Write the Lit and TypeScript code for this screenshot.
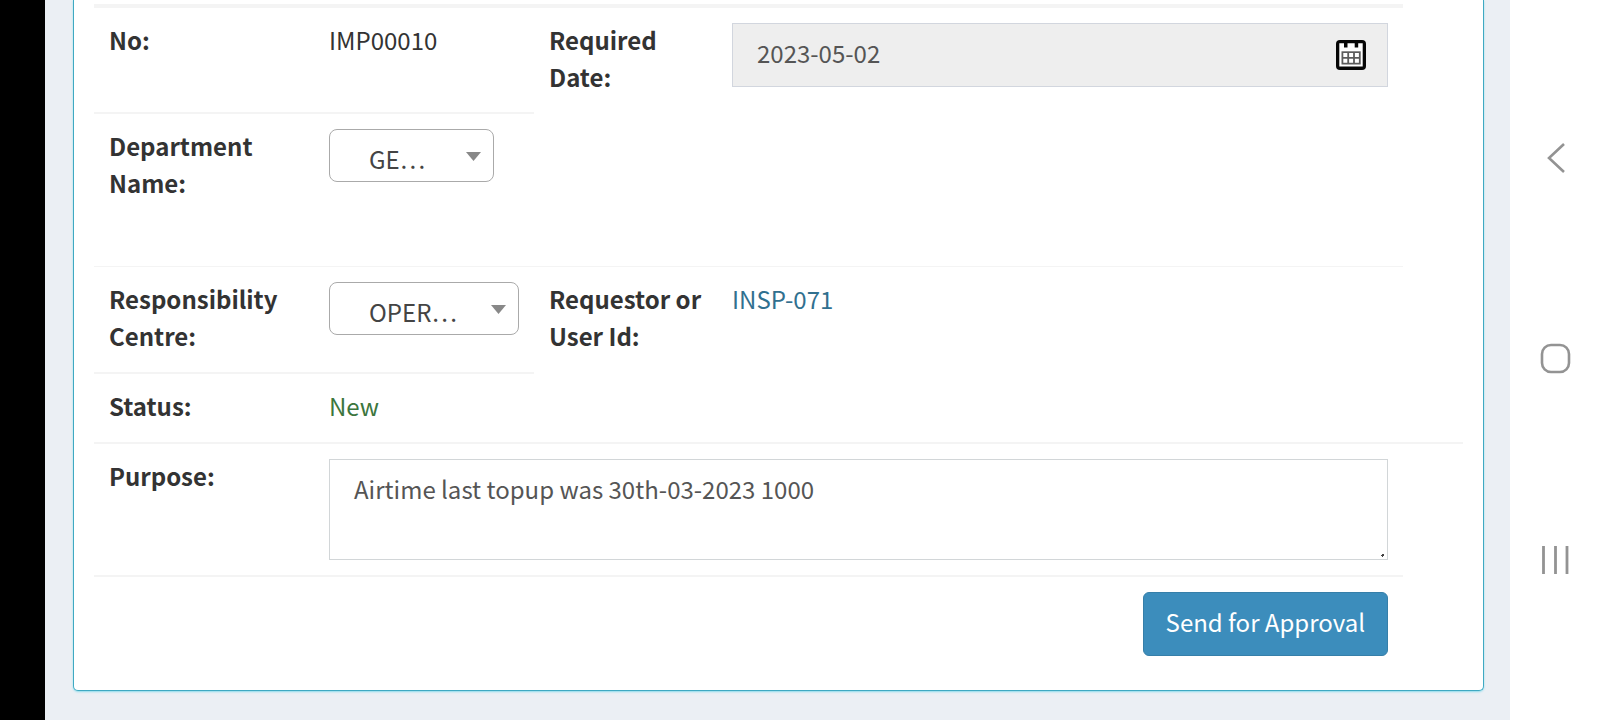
import { LitElement, html, css, svg } from "lit";
import { customElement } from "lit/decorators.js";

const caret = html`<svg class="caret" viewBox="0 0 15 9" aria-hidden="true"><path d="M0 0H15L7.5 9Z" fill="#888"/></svg>`;

@customElement("app-root")
export class AppRoot extends LitElement {
  static styles = css`
    :host {
      display: block;
      font: 400 24px/37px "Noto Sans CJK SC", "Noto Sans", sans-serif;
      color: #333;
    }
    * { box-sizing: border-box; }
    .screen {
      display: grid;
      grid-template-columns: 45px minmax(0, 1fr) 90px;
      min-height: 100vh;
      background: #fff;
    }
    .cutout { background: #000; }
    .page { background: #ebeff4; padding: 0 26px 29px 28px; }
    .card {
      background: #fff;
      border: 1px solid #3fa9c2;
      border-top: 0;
      border-radius: 0 0 5px 5px;
      box-shadow: 0 1px 2px #8fdcec;
      padding: 4px 20px 19px;
    }
    .form {
      display: grid;
      grid-template-columns:
        minmax(0, 220fr) minmax(0, 220fr) minmax(0, 183fr)
        minmax(0, 686fr) minmax(0, 60fr);
      grid-template-rows:
        4px minmax(106px, auto) minmax(153px, auto) minmax(107px, auto)
        minmax(70px, auto) auto auto;
    }
    .cell { padding: 15px; min-width: 0; }
    .text { padding: 13px 15px 17px; }
    .wide { grid-column: 2 / 5; }
    .first { grid-column: 1; }
    .label { font-weight: 700; }
    .rule { border-bottom: 2px solid #f4f4f4; }
    .thin { border-bottom: 1px solid #f4f4f4; }
    .top { grid-column: 1 / 5; background: #f4f4f4; }
    .rest { grid-column: 3 / 6; }
    .blank { grid-column: 3 / 5; }
    .user { color: #31708f; text-decoration: none; }
    .new { color: #3c763d; }
    .field { position: relative; display: block; }
    .pick { display: block; position: relative; }
    .dept { width: 165px; }
    .centre { width: 190px; }
    select, input, textarea, button { font: inherit; margin: 0; outline: 0; }
    select {
      display: block;
      width: 100%;
      height: 53px;
      padding: 6px 40px 0 39px;
      border: 1px solid #aaa;
      border-radius: 8px;
      background: #fff;
      color: #444;
      appearance: none;
    }
    .caret {
      position: absolute;
      right: 13px;
      top: 23px;
      width: 15px;
      height: 9px;
      pointer-events: none;
    }
    input {
      display: block;
      width: 100%;
      height: 64px;
      padding: 0 64px 5px 24px;
      border: 1px solid #d2d6de;
      border-radius: 0;
      background: #eee;
      color: #555;
    }
    .cal {
      position: absolute;
      right: 22px;
      top: 17px;
      width: 30px;
      height: 30px;
      padding: 0;
      border: 0;
      background: none;
    }
    .cal svg { display: block; }
    textarea {
      display: block;
      width: 100%;
      height: 101px;
      padding: 10px 24px;
      border: 1px solid #d2d6d8;
      border-radius: 0;
      background: #fff;
      color: #555;
      resize: none;
    }
    .grip { position: absolute; right: 4px; bottom: 3px; width: 3px; height: 3px; }
    .actions { grid-column: 1 / 5; display: flex; justify-content: flex-end; }
    .send {
      height: 64px;
      padding: 0 22px 5px;
      border: 1px solid #367fa9;
      border-radius: 6px;
      background: #3c8dbc;
      color: #fff;
    }
    .nav {
      display: flex;
      flex-direction: column;
      align-items: center;
      justify-content: space-between;
      padding: 142px 0 144px;
      background: #fff;
    }
    .nav button {
      display: block;
      width: 32px;
      height: 32px;
      padding: 0;
      border: 0;
      background: none;
    }
    .nav svg { display: block; fill: none; stroke: #939393; }
  `;

  private navButton(name: string, shape: unknown) {
    return html`<button type="button" aria-label=${name}>
      <svg width="32" height="32" viewBox="0 0 32 32">${shape}</svg>
    </button>`;
  }

  render() {
    return html`
      <div class="screen">
        <div class="cutout"></div>
        <main class="page">
          <section class="card">
            <form class="form" @submit=${(e: Event) => e.preventDefault()}>
              <div class="top"></div>

              <div class="text first label rule">No:</div>
              <div class="text rule">IMP00010</div>
              <label class="text label" for="date">Required Date:</label>
              <div class="cell">
                <div class="field">
                  <input id="date" type="text" readonly .value=${"2023-05-02"} />
                  <button class="cal" type="button" aria-label="Choose date">
                    <svg width="30" height="30" viewBox="0 0 30 30">
                      <rect width="30" height="30" rx="4" fill="#060606"/>
                      <path d="M3.3 3.3H8V7.5H11.5V3.3H18.7V7.5H22.2V3.3H26.7V26.6H3.3Z" fill="#fff"/>
                      <rect x="5.5" y="11.3" width="19.2" height="13.2" fill="#5c5c5c"/>
                      <path d="M7.300 13h4v4h-4zM13.100 13h4v4h-4zM18.900 13h4v4h-4zM7.300 18.800h4v4h-4zM13.100 18.800h4v4h-4zM18.900 18.800h4v4h-4z" fill="#fff"/>
                    </svg>
                  </button>
                </div>
              </div>

              <label class="text first label thin" for="dept">Department Name:</label>
              <div class="cell thin">
                <div class="pick dept">
                  <select id="dept"><option>GE…</option></select>
                  ${caret}
                </div>
              </div>
              <div class="blank thin"></div>

              <label class="text first label rule" for="centre">Responsibility Centre:</label>
              <div class="cell rule">
                <div class="pick centre">
                  <select id="centre"><option>OPER…</option></select>
                  ${caret}
                </div>
              </div>
              <div class="text label">Requestor or User Id:</div>
              <div class="text"><a class="user" href="#">INSP-071</a></div>

              <div class="text first label rule">Status:</div>
              <div class="text new rule">New</div>
              <div class="rest rule"></div>

              <label class="text first label rule" for="purpose">Purpose:</label>
              <div class="cell wide rule">
                <div class="field">
                  <textarea id="purpose" .value=${"Airtime last topup was 30th-03-2023 1000"}></textarea>
                  <svg class="grip" viewBox="0 0 3 3" aria-hidden="true"><path d="M1 0H3V2H2V3H1V2H0V1H1Z" fill="#444"/></svg>
                </div>
              </div>

              <div class="cell actions">
                <button class="send" type="submit">Send for Approval</button>
              </div>
            </form>
          </section>
        </main>
        <nav class="nav" aria-label="System">
          ${this.navButton("Back", svg`<path d="M25 2L10 16L25 30" stroke-width="2.6"/>`)}
          ${this.navButton("Home", svg`<rect x="3" y="2" width="27" height="27" rx="9" stroke-width="2.600"/>`)}
          ${this.navButton("Recents", svg`<path d="M4.500 2V30M16.500 2V30M28 2V30" stroke-width="2.800"/>`)}
        </nav>
      </div>
    `;
  }
}
